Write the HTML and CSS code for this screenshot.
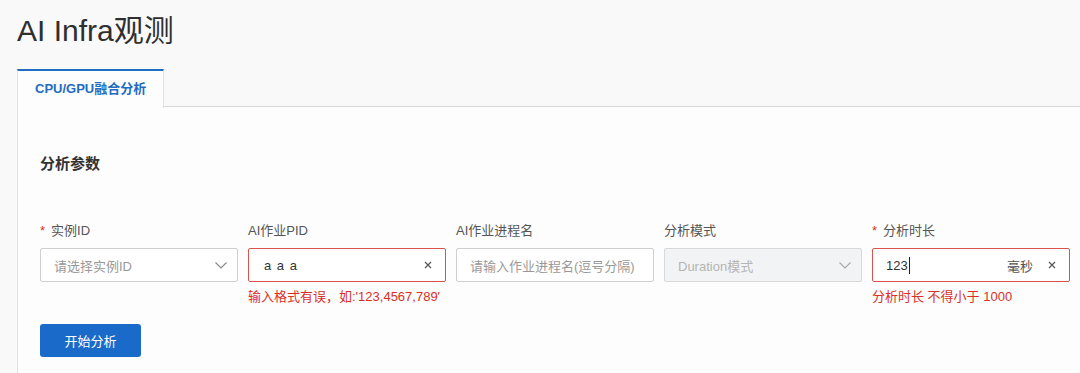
FILE: index.html
```html
<!DOCTYPE html>
<html lang="zh-CN">
<head>
<meta charset="utf-8">
<title>AI Infra观测</title>
<link rel="stylesheet" href="styles.css">
</head>
<body>
  <h1 class="title">AI Infra观测</h1>
  <div class="tabs">
    <div class="tab tab-active">CPU/GPU融合分析</div>
    <div class="tab-rest"></div>
  </div>
  <div class="panel">
    <h2 class="section-title">分析参数</h2>
    <div class="form-row">
      <div class="field">
        <label class="label"><span class="req">*</span>实例ID</label>
        <div class="control">
          <span class="placeholder">请选择实例ID</span>
          <svg class="chevron" width="12" height="7" viewBox="0 0 12 7"><path d="M0.5 0.5 L6 6 L11.5 0.5" fill="none" stroke="#8a8a8a" stroke-width="1.2"/></svg>
        </div>
        <div class="error"></div>
      </div>
      <div class="field">
        <label class="label">AI作业PID</label>
        <div class="control control-error">
          <span class="value value-pid">a a a</span>
          <svg class="clear" width="8" height="8" viewBox="0 0 8 8"><path d="M1 1 L7 7 M7 1 L1 7" stroke="#555" stroke-width="1.2"/></svg>
        </div>
        <div class="error">输入格式有误，如:'123,4567,789'</div>
      </div>
      <div class="field">
        <label class="label">AI作业进程名</label>
        <div class="control">
          <span class="placeholder">请输入作业进程名(逗号分隔)</span>
        </div>
        <div class="error"></div>
      </div>
      <div class="field">
        <label class="label">分析模式</label>
        <div class="control control-disabled">
          <span class="disabled-text">Duration模式</span>
          <svg class="chevron" width="12" height="7" viewBox="0 0 12 7"><path d="M0.5 0.5 L6 6 L11.5 0.5" fill="none" stroke="#a8a8a8" stroke-width="1.2"/></svg>
        </div>
        <div class="error"></div>
      </div>
      <div class="field">
        <label class="label"><span class="req">*</span>分析时长</label>
        <div class="control control-error">
          <span class="value">123<span class="caret"></span></span>
          <span class="unit">毫秒</span>
          <svg class="clear" width="8" height="8" viewBox="0 0 8 8"><path d="M1 1 L7 7 M7 1 L1 7" stroke="#555" stroke-width="1.2"/></svg>
        </div>
        <div class="error">分析时长 不得小于 1000</div>
      </div>
    </div>
    <button class="btn-primary" type="button">开始分析</button>
  </div>
</body>
</html>
```

FILE: styles.css
```css
html, body {
  margin: 0;
  padding: 0;
  background: #f9f9f9;
  overflow: hidden;
}
body {
  font-family: "Liberation Sans", "Noto Sans CJK SC", sans-serif;
  color: #333;
  padding-left: 17px;
}
.title {
  margin: 0;
  padding-top: 11px;
  font-size: 30px;
  line-height: 40px;
  font-weight: normal;
  color: #2f2f2f;
}
.tabs {
  display: flex;
  margin-top: 18px;
  height: 39px;
}
.tab {
  box-sizing: border-box;
  height: 39px;
  padding: 0 17px;
  font-size: 13px;
  font-weight: bold;
  line-height: 36px;
  color: #1f6cc2;
}
.tab-active {
  background: #fdfdfd;
  border-top: 2px solid #1f6cc2;
  border-left: 1px solid #e2e2e2;
  border-right: 1px solid #e2e2e2;
  position: relative;
  z-index: 1;
}
.tab-rest {
  flex: 1;
  border-bottom: 1px solid #d9d9d9;
  margin-bottom: 1px;
}
.panel {
  background: #fdfdfd;
  border-left: 1px solid #e2e2e2;
  margin-top: -1px;
  padding: 47px 0 20px 22px;
}
.section-title {
  margin: 0 0 47px;
  font-size: 15px;
  line-height: 20px;
  font-weight: bold;
  color: #333;
}
.form-row {
  display: grid;
  grid-template-columns: repeat(5, 198px);
  column-gap: 10px;
}
.field {
  display: flex;
  flex-direction: column;
}
.label {
  font-size: 13px;
  line-height: 20px;
  color: #555;
  margin-bottom: 7px;
}
.req {
  color: #d93026;
  margin-right: 6px;
}
.control {
  box-sizing: border-box;
  height: 34px;
  border: 1px solid #cfcfcf;
  border-radius: 2px;
  background: #fff;
  display: flex;
  align-items: center;
  padding: 0 10px 0 13px;
  font-size: 13px;
}
.control-error {
  border-color: #d9534c;
  padding-right: 13px;
}
.control-disabled {
  background: #f2f3f4;
  border-color: #d8d8d8;
}
.placeholder {
  color: #999;
  flex: 1;
  white-space: nowrap;
}
.disabled-text {
  color: #b5b5b5;
  flex: 1;
}
.value {
  color: #333;
  flex: 1;
  display: flex;
  align-items: center;
}
.value-pid {
  padding-left: 2px;
  word-spacing: 2px;
}
.caret {
  display: inline-block;
  width: 1px;
  height: 17px;
  background: #222;
  margin-left: 1px;
}
.unit {
  color: #555;
  margin-right: 15px;
}
.chevron {
  flex: none;
}
.clear {
  flex: none;
}
.error {
  margin-top: 6px;
  min-height: 18px;
  font-size: 13px;
  line-height: 18px;
  color: #d93026;
  white-space: nowrap;
}
.btn-primary {
  margin-top: 18px;
  width: 101px;
  height: 33px;
  border: none;
  border-radius: 3px;
  background: #1a6bc9;
  color: #fff;
  font-family: "Liberation Sans", "Noto Sans CJK SC", sans-serif;
  font-size: 13px;
  padding: 0;
}
```
